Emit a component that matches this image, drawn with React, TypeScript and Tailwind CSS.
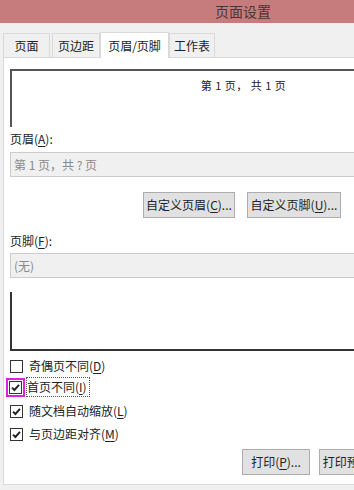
import { ReactNode } from 'react';

const font = { fontFamily: '"Microsoft YaHei", "Noto Sans CJK SC", "Noto Sans", sans-serif' };

function Key({ children }: { children: ReactNode }) {
  return <span className="underline underline-offset-2">{children}</span>;
}

function Tab({ label, active, className = '' }: { label: string; active?: boolean; className?: string }) {
  if (active) {
    return (
      <div
        className={`relative z-10 -mb-px flex h-[26px] items-center justify-center whitespace-nowrap border border-b-0 border-[#d9d9d9] bg-white text-[12px] text-[#222] ${className}`}
      >
        {label}
      </div>
    );
  }
  return (
    <div
      className={`flex h-[24px] items-center justify-center whitespace-nowrap border border-b-0 border-[#d9d9d9] bg-[#f0f0f0] text-[12px] text-[#222] ${className}`}
    >
      {label}
    </div>
  );
}

function Button({ children, className = '' }: { children: ReactNode; className?: string }) {
  return (
    <div
      className={`flex h-[26px] items-center justify-center whitespace-nowrap border border-[#adadad] bg-[#e1e1e1] text-[12px] text-[#222] ${className}`}
    >
      {children}
    </div>
  );
}

function Check({ checked }: { checked?: boolean }) {
  return (
    <div className="flex h-[13px] w-[13px] shrink-0 items-center justify-center border border-[#333] bg-white">
      {checked && (
        <svg width="11" height="11" viewBox="0 0 11 11">
          <path d="M2 5.6 L4.4 8 L9 2.8" fill="none" stroke="#222" strokeWidth="1.9" />
        </svg>
      )}
    </div>
  );
}

function CheckRow({
  checked,
  children,
  className = '',
  focused,
}: {
  checked?: boolean;
  children: ReactNode;
  className?: string;
  focused?: boolean;
}) {
  return (
    <div className={`flex h-[20px] items-center ${className}`}>
      {focused ? (
        <div className="-ml-[4px] flex h-[19px] w-[19px] items-center justify-center border-2 border-[#e020e0]">
          <Check checked={checked} />
        </div>
      ) : (
        <Check checked={checked} />
      )}
      <span
        className={`text-[12px] leading-[18px] text-[#222] ${
          focused ? 'ml-[1px] border border-dotted border-[#555] pr-[2px]' : 'ml-[6px]'
        }`}
      >
        {children}
      </span>
    </div>
  );
}

export default function App() {
  return (
    <div className="h-[490px] w-[354px] overflow-hidden bg-[#f0f0f0]" style={font}>
      <div className="w-[486px]">
        {/* title bar */}
        <div className="flex h-[23px] items-center justify-center bg-[#c67c7c] text-[14px] text-[#4a3434]">
          页面设置
        </div>

        <div className="pt-[9px]">
          {/* tabs */}
          <div className="ml-[3px] flex items-end">
            <Tab label="页面" className="w-[47px]" />
            <Tab label="页边距" className="ml-[2px] w-[48px]" />
            <Tab label="页眉/页脚" active className="w-[69px]" />
            <Tab label="工作表" className="w-[46px]" />
          </div>

          {/* panel */}
          <div className="ml-[3px] h-[428px] border border-[#d9d9d9] bg-white pl-[6px] pr-[10px]">
            <div className="mt-[11px] flex h-[58px] justify-center border-l-2 border-t-2 border-[#555] pt-[7px]">
              <span className="text-[11px] leading-[14px] tracking-[0.5px] text-[#222]">第 1 页， 共 1 页</span>
            </div>

            <div className="mt-[4px] text-[12px] leading-[16px] text-[#222]">
              页眉(<Key>A</Key>):
            </div>
            <div className="mt-[5px] flex h-[25px] items-center border border-[#cccccc] bg-[#f0f0f0] pl-[3px] text-[12px] text-[#8a8a8a]">
              第 1 页，共 ? 页
            </div>

            <div className="ml-[133px] mt-[15px] flex gap-[12px]">
              <Button className="w-[92px]">
                自定义页眉(<Key>C</Key>)...
              </Button>
              <Button className="w-[94px]">
                自定义页脚(<Key>U</Key>)...
              </Button>
            </div>

            <div className="mt-[15px] text-[12px] leading-[16px] text-[#222]">
              页脚(<Key>F</Key>):
            </div>
            <div className="mt-[4px] flex h-[25px] items-center border border-[#cccccc] bg-[#f0f0f0] pl-[3px] text-[12px] text-[#8a8a8a]">
              (无)
            </div>

            <div className="mt-[14px] h-[59px] border-b-2 border-l-2 border-[#333]" />

            <CheckRow className="mt-[5px]">
              奇偶页不同(<Key>D</Key>)
            </CheckRow>
            <CheckRow className="mt-[1px]" checked focused>
              首页不同(<Key>I</Key>)
            </CheckRow>
            <CheckRow className="mt-[4px]" checked>
              随文档自动缩放(<Key>L</Key>)
            </CheckRow>
            <CheckRow className="mt-[3px]" checked>
              与页边距对齐(<Key>M</Key>)
            </CheckRow>

            <div className="ml-[232px] mt-[5px] flex gap-[9px]">
              <Button className="h-[25px] w-[68px]">
                打印(<Key>P</Key>)...
              </Button>
              <Button className="h-[25px] w-[84px]">
                打印预览(<Key>W</Key>)...
              </Button>
            </div>
          </div>
        </div>
      </div>
    </div>
  );
}
